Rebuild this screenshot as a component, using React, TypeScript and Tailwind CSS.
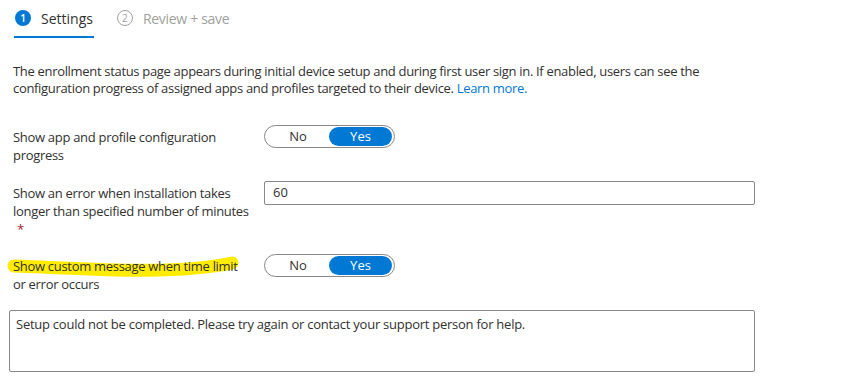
import React from "react";

const font = { fontFamily: '"Segoe UI", "Open Sans", "Noto Sans", sans-serif' };

function Toggle() {
  return (
    <div className="flex h-[23px] w-[131px] items-center rounded-full border border-[#8a8886] bg-white p-[2px]">
      <div className="flex flex-1 items-center justify-center text-[13px] text-[#323130]">No</div>
      <div className="flex h-[19px] w-[63px] items-center justify-center rounded-full bg-[#0078d4] text-[13px] text-white">
        Yes
      </div>
    </div>
  );
}

export default function App() {
  return (
    <div className="h-[387px] w-[853px] overflow-hidden bg-white text-[#323130]" style={font}>
      {/* Tabs */}
      <div className="flex h-[38px] items-stretch pl-[14px]">
        <div className="flex items-center gap-[10px] border-b-2 border-[#0078d4] pr-[1px] pl-[1px]">
          <div className="flex h-[16px] w-[16px] items-center justify-center rounded-full bg-[#0078d4] text-[10px] font-semibold text-white">
            1
          </div>
          <span className="text-[14px] text-[#323130]">Settings</span>
        </div>
        <div className="ml-[23px] flex items-center gap-[10px] border-b-2 border-transparent">
          <div className="flex h-[16px] w-[16px] items-center justify-center rounded-full border border-[#a19f9d] text-[10px] text-[#a19f9d]">
            2
          </div>
          <span className="text-[14px] tracking-[-0.3px] text-[#a19f9d]">Review + save</span>
        </div>
      </div>

      {/* Description */}
      <p className="mt-[25px] pl-[13px] text-[13px] leading-[17px] tracking-[-0.32px] text-[#323130]">
        The enrollment status page appears during initial device setup and during first user sign in. If enabled, users can see the
        <br />
        configuration progress of assigned apps and profiles targeted to their device.{" "}
        <span className="text-[#0078d4]">Learn more.</span>
      </p>

      {/* Row 1 */}
      <div className="mt-[28px] flex items-start pl-[13px]">
        <div className="w-[251px] pt-[3px] text-[13px] leading-[18px] tracking-[-0.3px]">
          Show app and profile configuration
          <br />
          progress
        </div>
        <Toggle />
      </div>

      {/* Row 2 */}
      <div className="mt-[17px] flex items-start pl-[13px]">
        <div className="w-[251px] pt-[3px] text-[13px] leading-[18px] tracking-[-0.3px]">
          Show an error when installation takes
          <br />
          longer than specified number of minutes
          <br />
          <span className="pl-[4px] text-[#a4262c]">*</span>
        </div>
        <div className="flex h-[24px] w-[491px] items-center rounded-[2px] border border-[#8a8886] pl-[8px] text-[13px]">
          60
        </div>
      </div>

      {/* Row 3 */}
      <div className="mt-[16px] flex items-start pl-[13px]">
        <div className="relative w-[251px] pt-[3px] text-[13px] leading-[18px] tracking-[-0.3px]">
          <svg
            className="pointer-events-none absolute left-[-13px] top-[-4px]"
            width="260"
            height="40"
            viewBox="0 250 260 40"
          >
            <path
              d="M 14 266 C 80 268, 170 276, 232 263"
              fill="none"
              stroke="#ffec00"
              strokeWidth="13"
              strokeLinecap="round"
            />
          </svg>
          <span className="relative">
            Show custom message when time limit
            <br />
            or error occurs
          </span>
        </div>
        <Toggle />
      </div>

      {/* Textarea */}
      <div className="ml-[9px] mt-[17px] h-[62px] w-[746px] rounded-[2px] border border-[#8a8886] px-[6px] pt-[4px] text-[13px] leading-[18px] tracking-[-0.25px]">
        Setup could not be completed. Please try again or contact your support person for help.
      </div>
    </div>
  );
}
